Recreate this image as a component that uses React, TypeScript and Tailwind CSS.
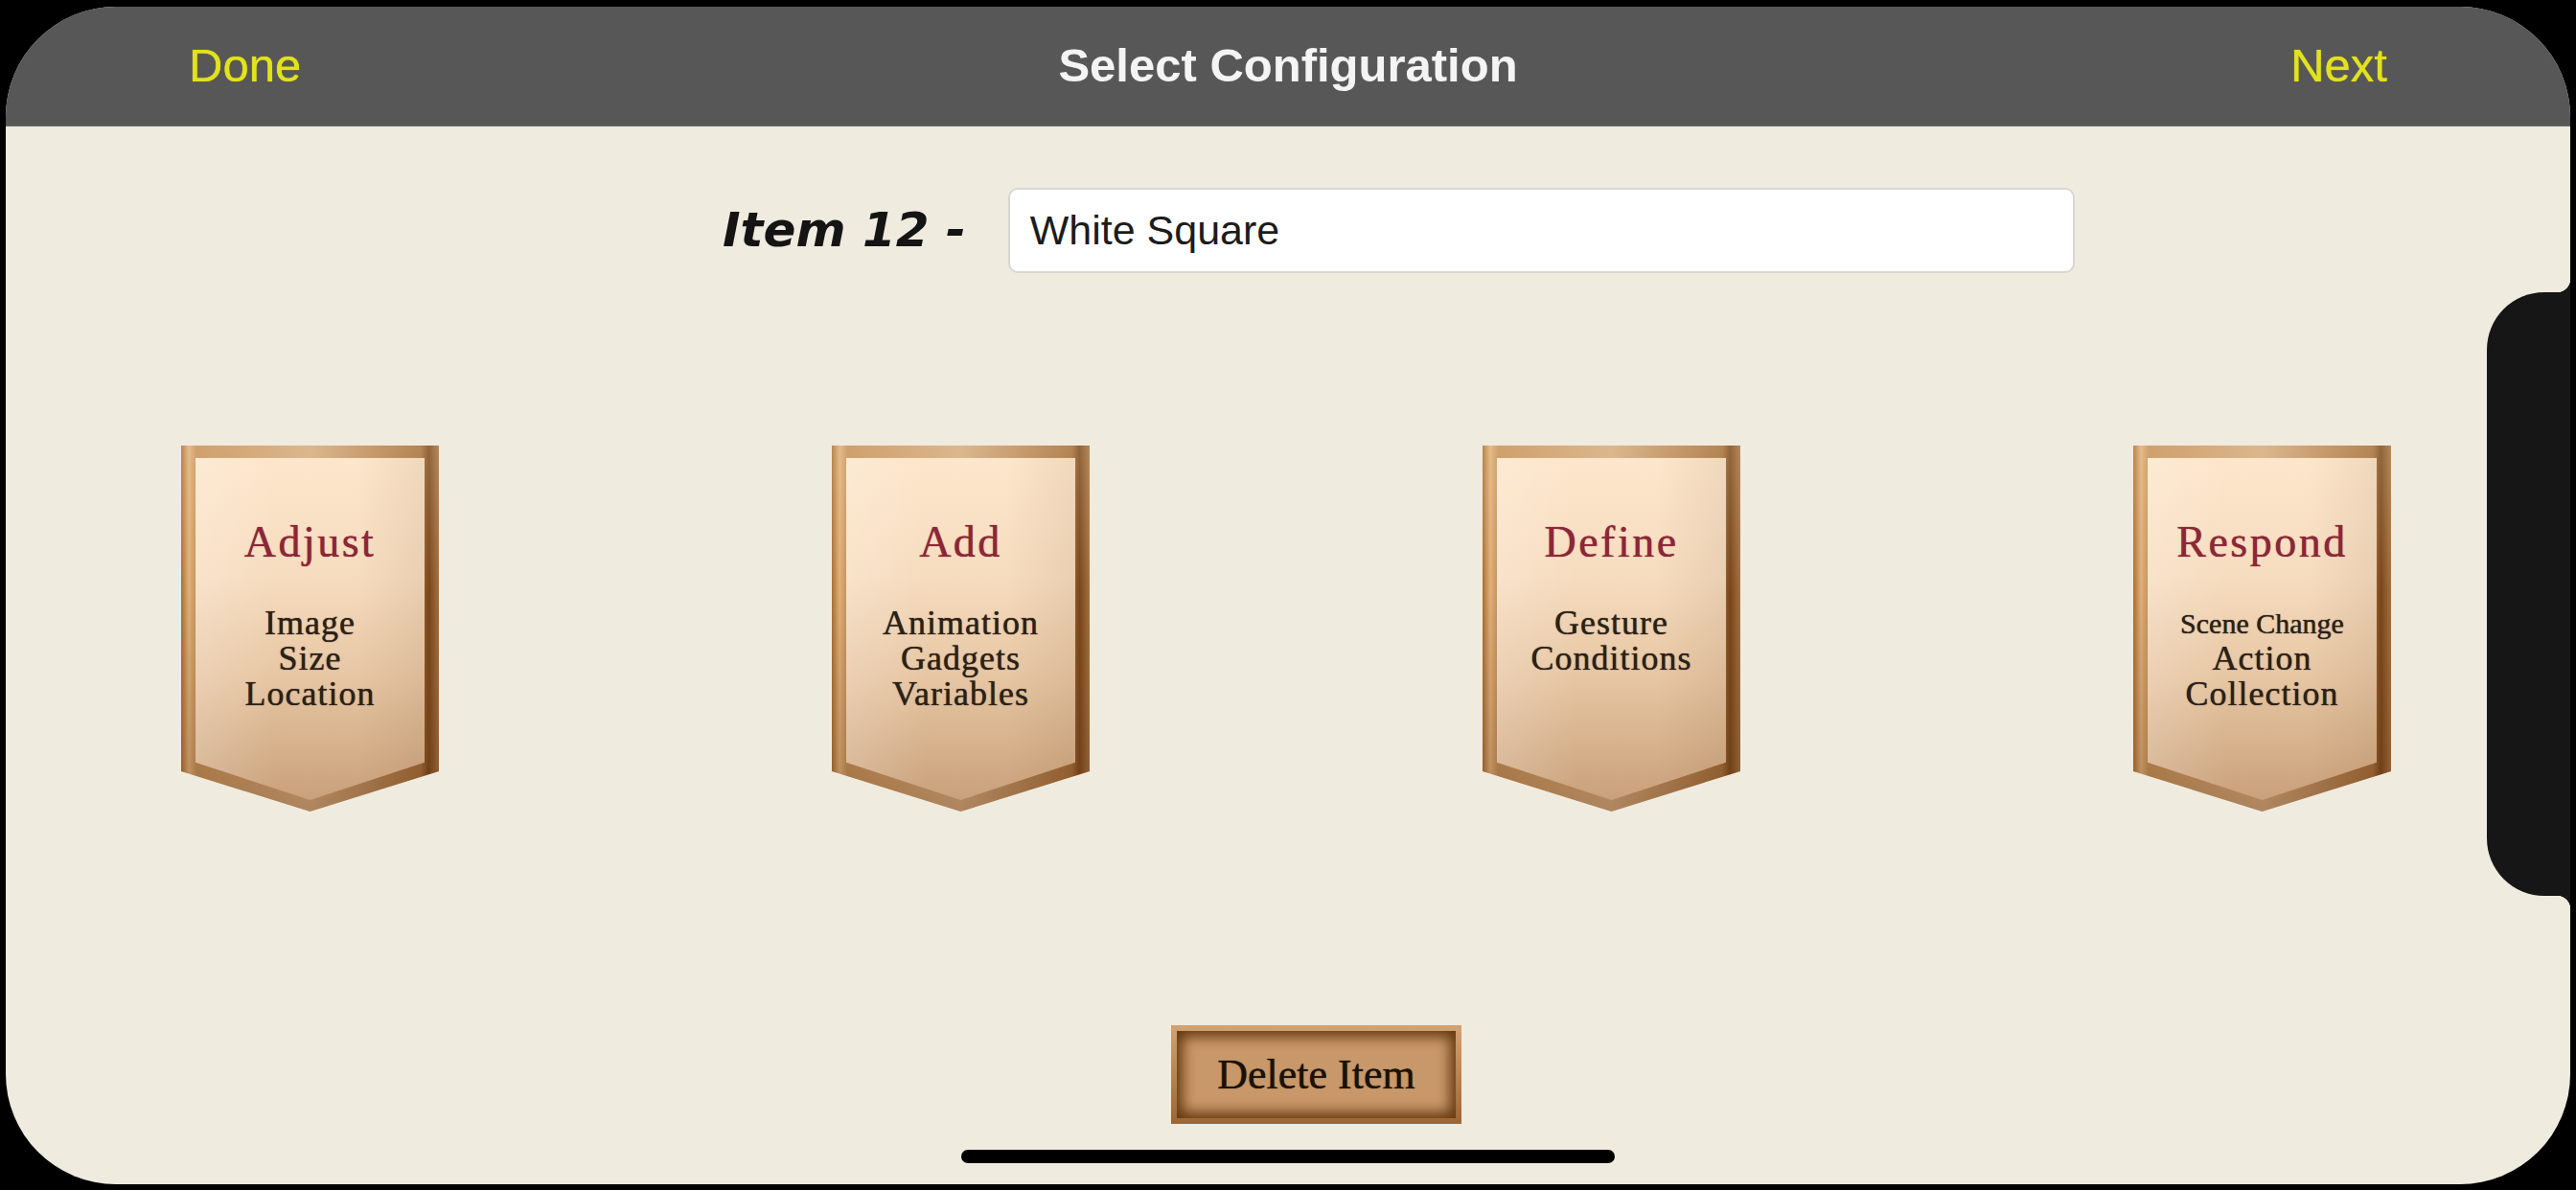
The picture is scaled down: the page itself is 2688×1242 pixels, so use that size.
type Line = { text: string; small?: boolean };
type Card = { title: string; lines: Line[] };

const CARDS: Card[] = [
  { title: "Adjust", lines: [{ text: "Image" }, { text: "Size" }, { text: "Location" }] },
  { title: "Add", lines: [{ text: "Animation" }, { text: "Gadgets" }, { text: "Variables" }] },
  { title: "Define", lines: [{ text: "Gesture" }, { text: "Conditions" }] },
  {
    title: "Respond",
    lines: [{ text: "Scene Change", small: true }, { text: "Action" }, { text: "Collection" }],
  },
];

function Banner({ title, lines }: Card) {
  return (
    <div className="w-[269px] h-[382px] pt-[13px] px-[15px] pb-[12px] [clip-path:polygon(0_0,100%_0,100%_89%,50%_100%,0_89%)] bg-[linear-gradient(180deg,rgba(255,235,200,0.2)_0%,rgba(0,0,0,0)_40%,rgba(90,50,20,0.3)_100%),linear-gradient(90deg,#a86e32_0%,#e0b07a_3%,#c38f58_6%,#d3aa80_50%,#a26c38_93%,#774519_96%,#a3703f_100%)]">
      <div className="h-full flex flex-col items-center pt-[62px] [clip-path:polygon(0_0,100%_0,100%_89%,50%_100%,0_89%)] bg-[linear-gradient(90deg,rgba(255,255,255,0.18)_0%,rgba(255,255,255,0)_35%,rgba(0,0,0,0)_70%,rgba(90,50,20,0.08)_100%),linear-gradient(180deg,#fde6cb_0%,#f6dcbf_35%,#e6c5a2_65%,#c9a17b_100%)] font-['Liberation_Serif',serif]">
        <div className="text-[46px] leading-[52px] tracking-[2.5px] text-[#8b2738] [text-shadow:0_0_1px_#8b2738]">{title}</div>
        <div className="mt-[40px] flex flex-col items-center text-[36px] leading-[37px] tracking-[1px] text-[#2c2117] [text-shadow:0_0_1px_#2c2117]">
          {lines.map((l) => (
            <div key={l.text} className={l.small ? "text-[30px] tracking-[0px]" : ""}>
              {l.text}
            </div>
          ))}
        </div>
      </div>
    </div>
  );
}

export default function App() {
  return (
    <div className="w-[2688px] h-[1242px] bg-black pt-[7px] pl-[6px] pr-[6px] pb-[6px]">
      <div className="relative h-full rounded-[115px] overflow-hidden bg-[#f0ebdf] flex flex-col">
        {/* Nav bar */}
        <div className="h-[125px] shrink-0 bg-[#575757] border-b border-[#6a6a66] grid grid-cols-[1fr_auto_1fr] items-center px-[191px] font-['Liberation_Sans',sans-serif] text-[49px]">
          <span className="text-[#e2e21e] justify-self-start [text-shadow:0_0_1px_#e2e21e]">Done</span>
          <span className="text-[#f4f4f4] font-bold">Select Configuration</span>
          <span className="text-[#e2e21e] justify-self-end [text-shadow:0_0_1px_#e2e21e]">Next</span>
        </div>

        {/* Item name */}
        <div className="mt-[64px] flex items-center gap-[44px] pl-[748px]">
          <span className="font-['DejaVu_Sans',sans-serif] font-bold italic text-[50px] text-[#141414]">Item 12 -</span>
          <div className="w-[1113px] h-[89px] flex items-center pl-[21px] bg-white rounded-[10px] border-2 border-[#d9d7d2] font-['Liberation_Sans',sans-serif] text-[43px] text-[#1c1c1c]">
            White Square
          </div>
        </div>

        {/* Banners */}
        <div className="mt-[180px] flex gap-[410px] pl-[183px]">
          {CARDS.map((c) => (
            <Banner key={c.title} {...c} />
          ))}
        </div>

        {/* Delete */}
        <div className="mt-[223px] pl-[1216px]">
          <div className="w-[303px] h-[103px] p-[6px] bg-[linear-gradient(180deg,#d4a373,#9c6534)]">
            <div className="h-full flex items-center justify-center bg-[#c9986a] shadow-[inset_0_0_14px_6px_#653810] font-['Liberation_Serif',serif] text-[44px] text-[#1a1208] [text-shadow:0_0_1px_#1a1208]">
              Delete Item
            </div>
          </div>
        </div>

        {/* Notch */}
        <div className="absolute right-0 top-[298px] w-[87px] h-[630px] bg-[#161616] rounded-l-[60px]" />
        <div className="absolute right-0 top-[284px] w-[14px] h-[14px] bg-[radial-gradient(circle_at_0_0,transparent_14px,#161616_14.5px)]" />
        <div className="absolute right-0 top-[928px] w-[14px] h-[14px] bg-[radial-gradient(circle_at_0_100%,transparent_14px,#161616_14.5px)]" />

        {/* Home indicator */}
        <div className="absolute left-[997px] top-[1193px] w-[682px] h-[14px] rounded-full bg-black" />
      </div>
    </div>
  );
}
